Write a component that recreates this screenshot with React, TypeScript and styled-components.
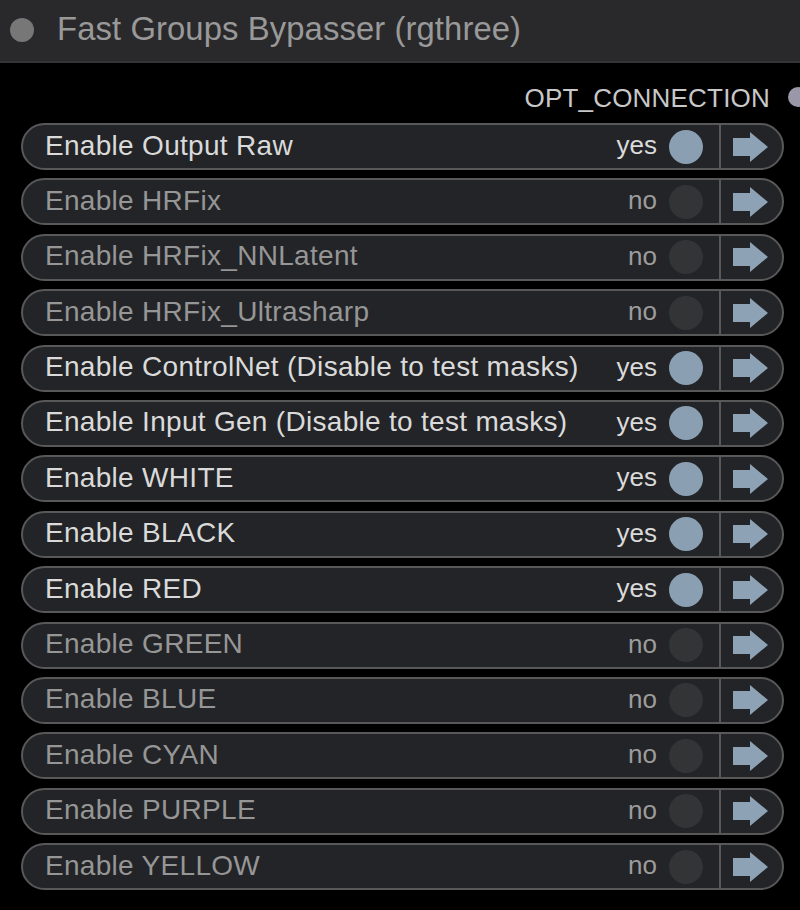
import React from "react";
import styled, { createGlobalStyle } from "styled-components";

const Global = createGlobalStyle`
  html, body { margin: 0; padding: 0; background: #000; }
  body { font-family: "Liberation Sans", Arial, sans-serif; width: 800px; height: 910px; overflow: hidden; }
`;

const Node = styled.div`
  width: 800px;
  height: 910px;
  background: #000;
  display: flex;
  flex-direction: column;
`;

const TitleBar = styled.div`
  height: 63px;
  box-sizing: border-box;
  background: #29292b;
  border-bottom: 2px solid #333436;
  display: flex;
  align-items: center;
  padding-left: 10px;
  gap: 23px;
`;

const TitleDot = styled.span`
  width: 24px;
  height: 24px;
  border-radius: 50%;
  background: #777;
  flex: none;
  margin-top: -2px;
`;

const TitleText = styled.span`
  font-size: 32.8px;
  color: #999;
  letter-spacing: 0.1px;
  margin-top: -3px;
`;

const OutputRow = styled.div`
  height: 60px;
  box-sizing: border-box;
  padding-top: 10px;
  display: flex;
  align-items: center;
  justify-content: flex-end;
  position: relative;
`;

const OutputLabel = styled.span`
  font-size: 26px;
  color: #c8c8c8;
  margin-right: 30px;
  letter-spacing: 0.2px;
`;

const OutputDot = styled.span`
  position: absolute;
  right: -8px;
  top: 34px;
  width: 20px;
  height: 20px;
  margin-top: -10px;
  border-radius: 50%;
  background: #9a98a8;
`;

const List = styled.div`
  display: flex;
  flex-direction: column;
  gap: 8.4px;
  padding-left: 21px;
  width: 763px;
`;

const Row = styled.div`
  height: 47px;
  box-sizing: border-box;
  border: 2px solid #585858;
  border-radius: 24px;
  background: #232427;
  display: flex;
  align-items: center;
  padding-left: 22px;
`;

const Label = styled.span<{ $on: boolean }>`
  flex: 1;
  font-size: 28px;
  letter-spacing: 0.3px;
  color: ${(p) => (p.$on ? "#dadada" : "#969696")};
  white-space: nowrap;
  margin-top: -2px;
`;

const Value = styled.span<{ $on: boolean }>`
  font-size: 26px;
  color: ${(p) => (p.$on ? "#dadada" : "#9c9c9c")};
  margin-right: 12px;
  margin-top: -2px;
`;

const Knob = styled.span<{ $on: boolean }>`
  width: 34px;
  height: 34px;
  border-radius: 50%;
  background: ${(p) => (p.$on ? "#8a9fb2" : "#333436")};
  flex: none;
  margin-right: 16px;
`;

const Divider = styled.span`
  width: 2px;
  align-self: stretch;
  background: #585858;
  flex: none;
`;

const ArrowBox = styled.span`
  width: 61px;
  display: flex;
  align-items: center;
  padding-left: 12px;
  box-sizing: border-box;
  flex: none;
`;

const Arrow = () => (
  <svg width="36" height="30" viewBox="0 0 36 30">
    <path d="M0 6 H17 V0 L35 15 L17 30 V24 H0 Z" fill="#8da2b5" />
  </svg>
);

const items: [string, boolean][] = [
  ["Enable Output Raw", true],
  ["Enable HRFix", false],
  ["Enable HRFix_NNLatent", false],
  ["Enable HRFix_Ultrasharp", false],
  ["Enable ControlNet (Disable to test masks)", true],
  ["Enable Input Gen (Disable to test masks)", true],
  ["Enable WHITE", true],
  ["Enable BLACK", true],
  ["Enable RED", true],
  ["Enable GREEN", false],
  ["Enable BLUE", false],
  ["Enable CYAN", false],
  ["Enable PURPLE", false],
  ["Enable YELLOW", false],
];

export default function App() {
  return (
    <Node>
      <Global />
      <TitleBar>
        <TitleDot />
        <TitleText>Fast Groups Bypasser (rgthree)</TitleText>
      </TitleBar>
      <OutputRow>
        <OutputLabel>OPT_CONNECTION</OutputLabel>
        <OutputDot />
      </OutputRow>
      <List>
        {items.map(([name, on]) => (
          <Row key={name}>
            <Label $on={on}>{name}</Label>
            <Value $on={on}>{on ? "yes" : "no"}</Value>
            <Knob $on={on} />
            <Divider />
            <ArrowBox>
              <Arrow />
            </ArrowBox>
          </Row>
        ))}
      </List>
    </Node>
  );
}
